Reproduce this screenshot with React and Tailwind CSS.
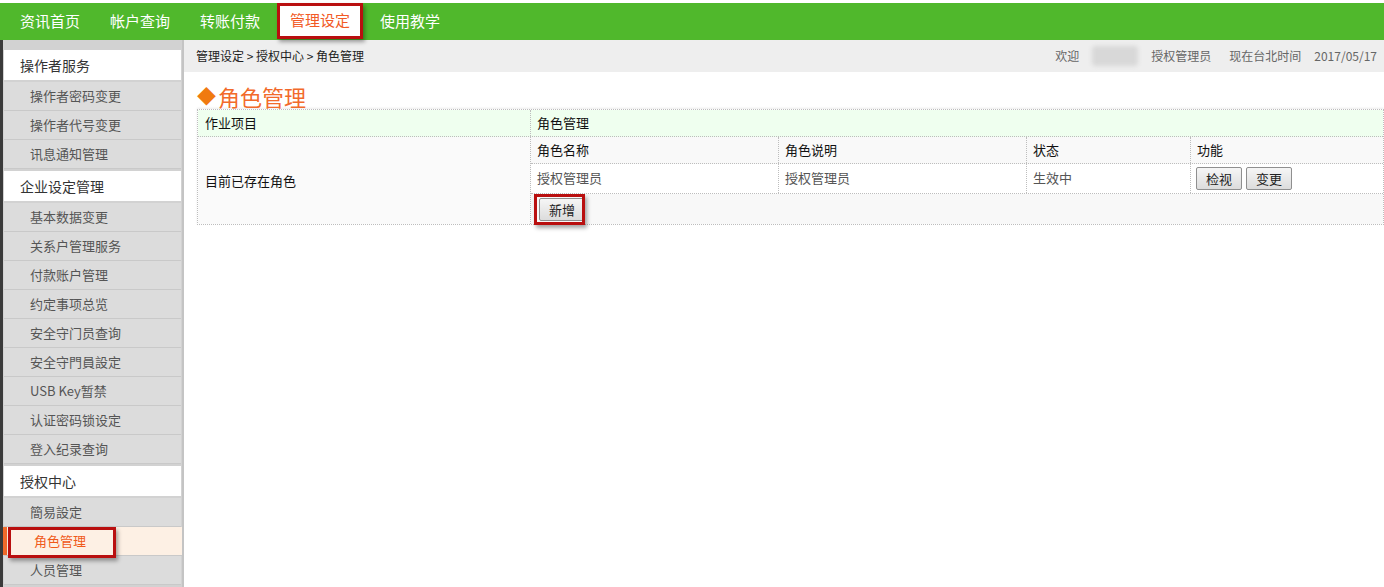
import React from "react";

const font = { fontFamily: '"Noto Sans CJK SC", "Noto Sans", sans-serif' };

const navItems = ["资讯首页", "帐户查询", "转账付款", "管理设定", "使用教学"];

const menu = [
  { title: "操作者服务", items: ["操作者密码变更", "操作者代号变更", "讯息通知管理"] },
  {
    title: "企业设定管理",
    items: [
      "基本数据变更",
      "关系户管理服务",
      "付款账户管理",
      "约定事项总览",
      "安全守门员查询",
      "安全守門員設定",
      "USB Key暂禁",
      "认证密码锁设定",
      "登入纪录查询",
    ],
  },
  { title: "授权中心", items: ["簡易設定", "角色管理", "人员管理"] },
];

const Btn = ({ children }) => (
  <button className="h-[23px] px-[9px] text-[13px] text-[#222] border border-[#8f8f8f] rounded-[2px] bg-gradient-to-b from-[#f6f6f6] to-[#dcdcdc] leading-none">
    {children}
  </button>
);

const Sidebar = () => (
  <div className="w-[184px] shrink-0 bg-[#d2d2d2] border-l-[3px] border-[#3a3a3a] border-r-[2px] border-r-[#c4c4c4] pt-[10px] pl-[1px]">
    {menu.map((group) => (
      <div key={group.title} className="mb-[2px]">
        <div className="h-[30px] bg-white flex items-center pl-[16px] text-[14px] text-[#333] mb-[2px] mr-[1px]">
          {group.title}
        </div>
        {group.items.map((it) =>
          it === "角色管理" ? (
            <div key={it} className="relative h-[29px] bg-[#fdf0e4] border-b border-[#c9c9c9] flex items-center pl-[30px] text-[13px] text-[#f05a1a]">
              <span className="absolute left-[-1px] top-0 bottom-0 w-[4px] bg-[#f06a2a]" />
              <span className="absolute left-[4px] top-[0px] w-[108px] h-[31px] border-[3px] border-[#b90f0f] shadow-[2px_3px_4px_rgba(0,0,0,0.35)]" />
              {it}
            </div>
          ) : (
            <div key={it} className="h-[29px] bg-[#dcdcdc] border-b border-[#c9c9c9] flex items-center pl-[26px] text-[13px] text-[#555] mr-[1px]">
              {it}
            </div>
          )
        )}
      </div>
    ))}
  </div>
);

export default function App() {
  return (
    <div className="w-[1384px] h-[587px] overflow-hidden bg-white flex flex-col" style={font}>
      <div className="h-[3px] bg-white shrink-0" />
      <div className="h-[37px] bg-[#50b82c] flex items-center pl-[20px] shrink-0">
        {navItems.map((n) =>
          n === "管理设定" ? (
            <div key={n} className="relative mr-[17px] ml-[-13px] w-[86px] h-[36px] -mt-[2px] bg-white border-[3px] border-[#b90f0f] shadow-[2px_3px_4px_rgba(0,0,0,0.35)] flex items-center justify-center text-[15px] text-[#f25a26]">
              {n}
            </div>
          ) : (
            <div key={n} className="mr-[30px] text-[15px] text-white">
              {n}
            </div>
          )
        )}
      </div>
      <div className="flex flex-1 min-h-0">
        <Sidebar />
        <div className="flex-1 min-w-0">
          <div className="h-[32px] bg-[#eeeeee] flex items-center justify-between pl-[12px] pr-[7px] text-[12px]">
            <span className="text-[#222]">管理设定 &gt; 授权中心 &gt; 角色管理</span>
            <div className="flex items-center text-[#666]">
              <span>欢迎</span>
              <span className="mx-[13px] w-[46px] h-[20px] bg-[#d8d8d8] blur-[2px] rounded" />
              <span className="mr-[18px]">授权管理员</span>
              <span className="mr-[13px]">现在台北时间</span>
              <span>2017/05/17</span>
            </div>
          </div>
          <div className="pl-[13px] pt-[10px]">
            <div className="flex items-center text-[22px] text-[#f26a2b] leading-[26px] h-[27px]">
              <span className="text-[#f07a10] text-[19px] mr-[2px]">◆</span>角色管理
            </div>
            <div className="border border-dotted border-[#bdbdbd] shadow-[0_-1px_2px_rgba(0,0,0,0.08)] text-[13px]">
              <div className="flex h-[27px] bg-[#efffef] border-b border-dotted border-[#bdbdbd] text-[#111]">
                <div className="w-[333px] border-r border-dotted border-[#bdbdbd] flex items-center pl-[7px]">作业项目</div>
                <div className="flex-1 flex items-center pl-[6px]">角色管理</div>
              </div>
              <div className="flex">
                <div className="w-[333px] bg-[#fafafa] border-r border-dotted border-[#bdbdbd] flex items-center pl-[7px] text-[#111]">
                  目前已存在角色
                </div>
                <div className="flex-1">
                  <div className="grid grid-cols-[248px_248px_164px_1fr] h-[27px] bg-[#f9f9f9] border-b border-dotted border-[#bdbdbd] text-[#111]">
                    <div className="flex items-center pl-[6px] border-r border-dotted border-[#bdbdbd]">角色名称</div>
                    <div className="flex items-center pl-[6px] border-r border-dotted border-[#bdbdbd]">角色说明</div>
                    <div className="flex items-center pl-[6px] border-r border-dotted border-[#bdbdbd]">状态</div>
                    <div className="flex items-center pl-[6px]">功能</div>
                  </div>
                  <div className="grid grid-cols-[248px_248px_164px_1fr] h-[30px] bg-white border-b border-dotted border-[#bdbdbd] text-[#555]">
                    <div className="pt-[4px] pl-[6px] border-r border-dotted border-[#bdbdbd]">授权管理员</div>
                    <div className="pt-[4px] pl-[6px] border-r border-dotted border-[#bdbdbd]">授权管理员</div>
                    <div className="pt-[4px] pl-[6px] border-r border-dotted border-[#bdbdbd]">生效中</div>
                    <div className="flex items-center gap-[4px] pl-[5px]">
                      <Btn>检视</Btn>
                      <Btn>变更</Btn>
                    </div>
                  </div>
                  <div className="h-[30px] bg-[#f8f8f8] flex items-center pl-[8px]">
                    <div className="relative">
                      <span className="absolute -left-[5px] -top-[4px] w-[51px] h-[31px] border-[3px] border-[#b90f0f] shadow-[2px_3px_4px_rgba(0,0,0,0.35)]" />
                      <Btn>新增</Btn>
                    </div>
                  </div>
                </div>
              </div>
            </div>
          </div>
        </div>
      </div>
    </div>
  );
}
